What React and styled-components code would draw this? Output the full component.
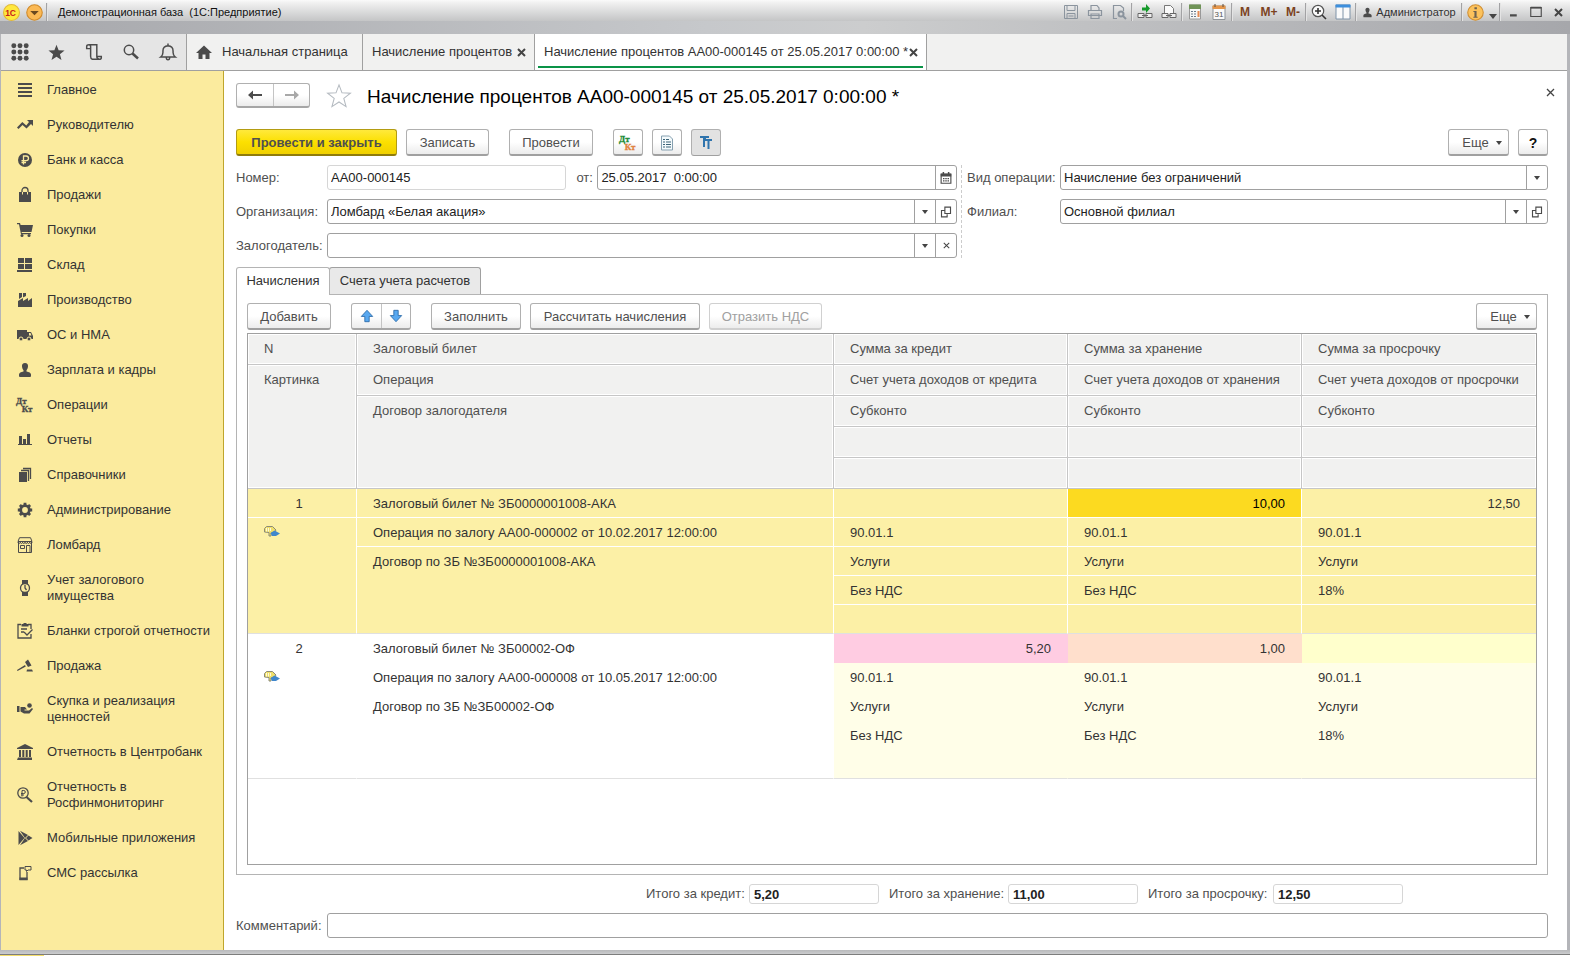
import React from "react";
import styled, { createGlobalStyle } from "styled-components";

const COLORS = {
  icon: "#4b4b4b",
  text: "#333333",
  label: "#4f4f4f",
  line: "#a0a0a0",
  sidebar: "#fbeb9e",
  selected: "#fcf0a6",
};

/* ---------- icons ---------- */

const Icon = ({ size = 16, children, ...rest }) => (
  <svg
    width={size}
    height={size}
    viewBox="0 0 16 16"
    fill={COLORS.icon}
    overflow="visible"
    aria-hidden="true"
    {...rest}
  >
    {children}
  </svg>
);

const stroke = { fill: "none", stroke: COLORS.icon, strokeWidth: 1.3 };

const DtKt = ({ top = COLORS.icon, bottom = COLORS.icon }) => (
  <Icon size={18} fontFamily="Liberation Serif, serif" fontSize="8" fontWeight="700" strokeWidth=".3">
    <text x="0" y="7" fill={top} stroke={top}>
      Дт
    </text>
    <text x="5" y="14" fill={bottom} stroke={bottom}>
      Кт
    </text>
  </Icon>
);

const SECTION_ICONS = {
  main: (
    <Icon>
      <path d="M1 1h14v2H1zM1 5h14v2H1zM1 9h14v2H1zM1 13h14v2H1z" />
    </Icon>
  ),
  trend: (
    <Icon>
      <path d="M10 3h6v6l-2-2-4.500 4.500-4-3.500-4 4L0 10.500 5.300 5l4 3.500L12 5z" />
    </Icon>
  ),
  ruble: (
    <Icon>
      <circle cx="8" cy="8" r="7" />
      <path
        d="M6.500 12.500V4h2.700a2.200 2.200 0 0 1 0 4.600H4.500M4.500 10.500h4.500"
        fill="none"
        stroke={COLORS.sidebar}
        strokeWidth="1.300"
      />
    </Icon>
  ),
  bag: (
    <Icon>
      <path d="M2 5h12v10H2z" />
      <path d="M5 6V3.500a3 3 0 0 1 6 0V6" {...stroke} />
      <path d="M5.500 5v2.500M10.500 5v2.500" stroke={COLORS.sidebar} strokeWidth="1" />
    </Icon>
  ),
  cart: (
    <Icon>
      <path d="M0 1h3l.6 2H16l-1.500 7H4.600l.2 1H14v1.200H4L2 2.200H0z" />
      <circle cx="5" cy="13.500" r="1.500" />
      <circle cx="12" cy="13.500" r="1.500" />
    </Icon>
  ),
  stock: (
    <Icon>
      <path d="M1 1h6v5H1zM8 1h7v5H8zM1 7h6v5H1zM8 7h7v5H8zM0 13h15v2H0z" />
    </Icon>
  ),
  factory: (
    <Icon>
      <path d="M1 15V9l5-3v3l5-3v3l4-3v9zM2 1h3v4L2 7zM6 1h3v3L6 5.500z" />
    </Icon>
  ),
  truck: (
    <Icon>
      <path d="M0 3h10v9H0zM11 5h3l2 4v3h-6V5z" />
      <path d="M12 6h1.500l1 2.500H12z" fill={COLORS.sidebar} />
      <circle cx="4" cy="12" r="2" stroke={COLORS.sidebar} />
      <circle cx="12" cy="12" r="2" stroke={COLORS.sidebar} />
    </Icon>
  ),
  person: (
    <Icon>
      <path d="M8 1c2.200 0 3.200 1.400 3 3.500-.2 1.800-.8 3-1.500 3.800v1.200c2.500.6 4.500 1.300 4.500 3V14q0 1-1 1H3q-1 0-1-1v-1.500c0-1.700 2-2.400 4.500-3V8.300C5.800 7.500 5.200 6.300 5 4.500 4.800 2.400 5.800 1 8 1z" />
    </Icon>
  ),
  dtkt: <DtKt />,
  chart: (
    <Icon>
      <path d="M2 4h3v8H2zM6 7h3v5H6zM10 2h3v10h-3zM1 12h14v1H1z" />
    </Icon>
  ),
  books: (
    <Icon>
      <path d="M2 5h8v10H2z" />
      <path d="M4 3.500h7.500V14M6 1.500h7.500V12" {...stroke} />
    </Icon>
  ),
  gear: (
    <Icon>
      <circle cx="8" cy="8" r="4.300" fill="none" stroke={COLORS.icon} strokeWidth="2.800" />
      <path
        d="M8 0.800v2.500M8 12.700v2.500M0.800 8h2.500M12.700 8h2.500M2.900 2.900l1.800 1.800M11.300 11.300l1.800 1.800M2.900 13.100l1.800-1.800M11.300 4.700l1.800-1.800"
        stroke={COLORS.icon}
        strokeWidth="2.800"
      />
    </Icon>
  ),
  shop: (
    <Icon>
      <path
        d="M1.500 5v10.500h13V5M1 4.500L2.500.7h11L15 4.500zM1 5c0 2 2.300 2 2.300 0 0 2 2.300 2 2.300 0 0 2 2.400 2 2.400 0 0 2 2.400 2 2.400 0 0 2 2.300 2 2.300 0 0 2 2.300 2 2.300 0M3.500 8.500h4v3h-4zM9.500 8.500h3.500v7H9.500z"
        {...stroke}
        strokeWidth="1"
      />
    </Icon>
  ),
  watch: (
    <Icon>
      <path d="M5 0h6v4H5zM5 12h6v4H5z" />
      <circle cx="8" cy="8" r="4.500" {...stroke} fill={COLORS.sidebar} />
      <path d="M8 5v3l1.500 2" {...stroke} />
    </Icon>
  ),
  form: (
    <Icon>
      <path d="M4 1.500H1V15h13v-4M11 1.500h3V6M4 6h6M4 9h3M7 9l3 3 5.500-5.500" {...stroke} />
      <path d="M4.500 1h2V0h3v1h2v2.500h-7z" />
    </Icon>
  ),
  gavel: (
    <Icon>
      <path d="M0 12l8-5 .8 1.400L.5 13zM8 4l3-2.500 3.500 6L11 9zM10 11.500h5l1 2H9.500z" />
    </Icon>
  ),
  hand: (
    <Icon>
      <path d="M0 5h2.500v6H0zM3.500 6H8l2 2.500H7.500v1H12L15 7l1 1-3.500 4.500H7L3.500 10.500z" />
      <circle cx="12.500" cy="4.500" r="2.300" />
    </Icon>
  ),
  bank: (
    <Icon>
      <path d="M8 0l8 4v1H0V4zM2 6h2v7H2zM5.300 6h2v7h-2zM8.700 6h2v7h-2zM12 6h2v7h-2zM1 13.500h14V16H0z" />
    </Icon>
  ),
  monitor: (
    <Icon>
      <circle cx="6" cy="6" r="5.200" {...stroke} />
      <path d="M5 9.500V3.500h1.800a1.500 1.500 0 0 1 0 3H4M4 8h3" {...stroke} strokeWidth="1" />
      <path d="M9.500 10l5.500 5" stroke={COLORS.icon} strokeWidth="2.200" />
    </Icon>
  ),
  play: (
    <Icon>
      <path d="M1.500 1l6 7-6 7zM3 .8l8 4.200-3 3zM3 15.200l8-4.200-3-3zM11.500 5.500L15.500 8l-4 2.500L9 8z" />
    </Icon>
  ),
  sms: (
    <Icon>
      <path d="M7 3H3v11.500h7V7" {...stroke} />
      <path d="M2.500 12.500h8V15h-8z" />
      <path d="M8 1.500h6v3.500h-3L9.500 6.500V5H8z" {...stroke} strokeWidth="1" />
    </Icon>
  ),
};

const StarShape = (props) => (
  <path
    d="M8 .6l2 5.300 5.600.2-4.400 3.500 1.500 5.500L8 12l-4.700 3.100 1.500-5.500L.4 6.100 6 5.900z"
    {...props}
  />
);

const SmallCross = ({ size = 9, weight = 1.3, color = "#444" }) => (
  <svg width={size} height={size} viewBox="0 0 9 9" aria-hidden="true">
    <path d="M1 1l7 7M8 1l-7 7" stroke={color} strokeWidth={weight} />
  </svg>
);

const OpenIcon = () => (
  <Icon size={12}>
    <path d="M6.500 1.500H14V10H6.500zM6 6H2v8.500h7.500V11" {...stroke} strokeWidth="1.500" />
  </Icon>
);

const CalendarIcon = () => (
  <Icon size={12}>
    <path d="M1.500 3h13v12h-13z" {...stroke} strokeWidth="1.500" />
    <path d="M1 2h14v4H1zM3.500 0h2v3h-2zM10.500 0h2v3h-2zM4 8h2v1.500H4zM7 8h2v1.500H7zM10 8h2v1.500h-2zM4 11h2v1.500H4zM7 11h2v1.500H7zM10 11h2v1.500h-2z" />
  </Icon>
);

const ArrowIcon = ({ down }) => (
  <Icon size={14} fill="#58a8f0" stroke="#2c6aa8">
    <path
      d={down ? "M5.500 1.500h5v6H14.500L8 14.500 1.500 7.500h4z" : "M5.500 14.500h5v-6H14.500L8 1.500 1.500 8.500h4z"}
    />
  </Icon>
);

const PledgeIcon = () => (
  <Icon>
    <path d="M.5 7V3.500l2-2h6L12 5l-2 3H7v3H5V7.500z" fill="#efdf6a" stroke="#8a8a78" />
    <path d="M2.500 3v3.500M4.500 3v3.500M6.500 3v3" stroke="#fff" strokeWidth=".8" />
    <path d="M6.500 8l4-2.500L16 8.500 12 11H8z" fill="#3f87cc" />
  </Icon>
);

/* ---------- data ---------- */

const SECTIONS = [
  ["main", "Главное"],
  ["trend", "Руководителю"],
  ["ruble", "Банк и касса"],
  ["bag", "Продажи"],
  ["cart", "Покупки"],
  ["stock", "Склад"],
  ["factory", "Производство"],
  ["truck", "ОС и НМА"],
  ["person", "Зарплата и кадры"],
  ["dtkt", "Операции"],
  ["chart", "Отчеты"],
  ["books", "Справочники"],
  ["gear", "Администрирование"],
  ["shop", "Ломбард"],
  ["watch", "Учет залогового имущества"],
  ["form", "Бланки строгой отчетности"],
  ["gavel", "Продажа"],
  ["hand", "Скупка и реализация ценностей"],
  ["bank", "Отчетность в Центробанк"],
  ["monitor", "Отчетность в Росфинмониторинг"],
  ["play", "Мобильные приложения"],
  ["sms", "СМС рассылка"],
];

const ROWS = [
  {
    n: 1,
    selected: true,
    ticket: "Залоговый билет № ЗБ0000001008-АКА",
    operation: "Операция по залогу АА00-000002 от 10.02.2017 12:00:00",
    contract: "Договор по ЗБ №ЗБ0000001008-АКА",
    sums: ["", "10,00", "12,50"],
    vat: ["Без НДС", "Без НДС", "18%"],
    fills: [COLORS.selected, "#fcda20", COLORS.selected],
  },
  {
    n: 2,
    ticket: "Залоговый билет № ЗБ00002-ОФ",
    operation: "Операция по залогу АА00-000008 от 10.05.2017 12:00:00",
    contract: "Договор по ЗБ №ЗБ00002-ОФ",
    sums: ["5,20", "1,00", ""],
    vat: ["Без НДС", "Без НДС", "18%"],
    fills: ["#ffcce2", "#ffdfcc", "#ffffcc"],
  },
];

/* ---------- parts ---------- */

const TitleBar = () => (
  <TitleStrip>
    <LogoButton aria-label="1С">
      <Icon size={17}>
        <circle cx="8" cy="8" r="7.500" fill="#ffe83d" stroke="#e3b93a" />
        <text x="2" y="11" fontSize="8" fontWeight="700" fill="#c8201c" fontFamily="Liberation Sans, sans-serif">
          1С
        </text>
      </Icon>
    </LogoButton>
    <LogoButton aria-label="Главное меню">
      <Icon size={17}>
        <circle cx="8" cy="8" r="7.300" fill="#fbb954" stroke="#cf8a2b" />
        <path d="M4 6.500h8L8 10.500z" fill="#6b4a20" />
      </Icon>
    </LogoButton>
    <Divider />
    <WindowTitle>Демонстрационная база&nbsp; (1С:Предприятие)</WindowTitle>
    <BarButton aria-label="Сохранить">
      <Icon fill="none" stroke="#8b949e">
        <path d="M1.500 1.500h13v13h-13zM4 1.500v5h8v-5M4 14.500v-5h8v5M5.500 12h5" />
      </Icon>
    </BarButton>
    <BarButton aria-label="Печать">
      <Icon fill="none" stroke="#8b949e" strokeWidth="1.200">
        <path d="M4 6V1.500h6L12 4v2M1.500 6.500h13v5h-13zM4 10h8v4.500H4z" />
      </Icon>
    </BarButton>
    <BarButton aria-label="Предварительный просмотр">
      <Icon fill="none" stroke="#8b949e" strokeWidth="1.200">
        <path d="M6 14.500H2.500v-13h7L12.500 4v3" />
        <circle cx="10" cy="10" r="2.500" strokeWidth="2" />
        <path d="M12 12l3 3" strokeWidth="2" />
      </Icon>
    </BarButton>
    <Divider />
    <BarButton aria-label="Получить ссылку">
      <Icon>
        <path d="M1 9.500h6v4H1zM9 9.500h6v4H9zM5 11.500h6" fill="#eee" stroke="#666" />
        <path d="M5 3.500h4V0l4 4.500L9 9V6.500H5z" fill="#159a2a" />
      </Icon>
    </BarButton>
    <BarButton aria-label="Перейти по ссылке">
      <Icon>
        <path d="M3.500 10V1.500h6l3 3V10" fill="#fafafa" stroke="#777" />
        <path d="M1 9.500h6v4H1zM9 9.500h6v4H9zM5 11.500h6" fill="#eee" stroke="#666" />
      </Icon>
    </BarButton>
    <Divider />
    <BarButton aria-label="Калькулятор">
      <Icon>
        <path d="M2.500 1h11v14h-11z" fill="#f8f8f8" stroke="#999" />
        <path d="M2 .5h12V5H2z" fill="#6f9357" />
        <path d="M4 7h2v1H4zM7 7h2v1H7zM4 9.500h2v1H4zM7 9.500h2v1H7zM4 12h2v1H4zM7 12h2v1H7z" fill="#6c7c8c" />
        <path d="M10.500 7h2v6h-2z" fill="#e58a55" />
      </Icon>
    </BarButton>
    <BarButton aria-label="Календарь">
      <Icon>
        <path d="M2 2h12v13.500H2z" fill="#fafafa" stroke="#8e9499" />
        <path d="M1.500 1.500h13V5h-13z" fill="#e5964a" />
        <path d="M4 0v3M12 0v3" stroke="#5b4a3a" />
        <text x="3.500" y="13" fontSize="8" fontFamily="Liberation Sans, sans-serif" fill="#555">
          31
        </text>
      </Icon>
    </BarButton>
    <Divider />
    <BarButton $memory>M</BarButton>
    <BarButton $memory>M+</BarButton>
    <BarButton $memory>M-</BarButton>
    <Divider />
    <BarButton aria-label="Масштаб">
      <Icon>
        <circle cx="7" cy="7" r="5.700" fill="#fafafa" stroke="#555" strokeWidth="1.200" />
        <path d="M4 7h6M7 4v6M11 11l4 4" stroke="#333" strokeWidth="1.600" />
      </Icon>
    </BarButton>
    <BarButton aria-label="Панели">
      <Icon>
        <path d="M1 1h14v14H1zM8 3v12" fill="#fafafa" stroke="#7f93a8" />
        <path d="M.5.5h15v3H.5z" fill="#3d8fdd" />
      </Icon>
    </BarButton>
    <Divider />
    <UserButton>
      <Icon size={11}>{SECTION_ICONS.person.props.children}</Icon>
      Администратор
    </UserButton>
    <Divider />
    <BarButton aria-label="Справка">
      <Icon size={17}>
        <circle cx="8" cy="8" r="7.300" fill="#fcc25c" stroke="#cf8f35" />
        <path d="M7 3h2.300v2H7zM6 6.500h3V12h1v1H6v-1h1V7.500H6z" fill="#6d6250" />
      </Icon>
    </BarButton>
    <BarButton $width="12px" aria-label="Ещё">
      <LowCaret />
    </BarButton>
    <Divider />
    <BarButton $width="23px" aria-label="Свернуть">
      <Icon size={12}>
        <path d="M4 11h9v3H4z" />
      </Icon>
    </BarButton>
    <BarButton $width="23px" aria-label="Развернуть">
      <Icon size={12}>
        <path d="M1 2h14v12H1z" {...stroke} strokeWidth="1.500" />
        <path d="M1 1h14v2.500H1z" />
      </Icon>
    </BarButton>
    <BarButton $width="23px" aria-label="Закрыть">
      <SmallCross weight={2} />
    </BarButton>
  </TitleStrip>
);

const TabStrip = () => (
  <TabRow>
    <ToolButton aria-label="Меню функций">
      <Icon size={18}>
        {[2.5, 8, 13.5].map((y) =>
          [2.5, 8, 13.5].map((x) => <circle key={`${x}-${y}`} cx={x} cy={y} r="2.200" />)
        )}
      </Icon>
    </ToolButton>
    <ToolButton aria-label="Избранное">
      <Icon size={17}>
        <StarShape />
      </Icon>
    </ToolButton>
    <ToolButton aria-label="История">
      <Icon size={18}>
        <path
          d="M3.500 1.500h7v10.500q0 2 2 2.500h-6q-1.500-.5-1.500-2.500V5H1.500V3q0-1.500 2-1.500zM5 5V3q0-1.500-1.500-1.500M10.500 12h4v1q0 1.500-2 1.500"
          {...stroke}
        />
      </Icon>
    </ToolButton>
    <ToolButton aria-label="Поиск">
      <Icon>
        <circle cx="6" cy="6" r="4.700" {...stroke} strokeWidth="1.500" />
        <path d="M9.500 9.500l5.500 5" stroke={COLORS.icon} strokeWidth="2.500" />
      </Icon>
    </ToolButton>
    <ToolButton aria-label="Оповещения">
      <Icon size={18}>
        <path d="M1.500 12.500q2-1.500 2-4V7q0-4 4.500-4.500Q12.500 3 12.500 7v1.500q0 2.500 2 4zM6.500 12.800q0 2 1.500 2t1.500-2M8 2.500V.5" {...stroke} />
      </Icon>
    </ToolButton>
    <WindowTab $width="176px" $home>
      <Icon>
        <path d="M8 1.500L16 9h-2.500v6h-4v-4.500h-3V15h-4V9H0z" />
      </Icon>
      Начальная страница
    </WindowTab>
    <WindowTab $width="172px">
      Начисление процентов
      <SmallCross weight={2} />
    </WindowTab>
    <WindowTab $width="393px" $active>
      Начисление процентов АА00-000145 от 25.05.2017 0:00:00 *
      <SmallCross weight={2} />
    </WindowTab>
  </TabRow>
);

const DropField = ({ id, label, value, children }) => (
  <>
    <FieldLabel htmlFor={id}>{label}</FieldLabel>
    <Field>
      <FieldSelect id={id} defaultValue={value}>
        <option value={value}>{value}</option>
      </FieldSelect>
      <FieldMark>
        <Caret />
      </FieldMark>
      {children}
    </Field>
  </>
);

const SumRow = ({ values, fills, numeric, selected, last }) =>
  values.map((value, i) => (
    <Cell key={i} $selected={selected} $fill={fills[i]} $numeric={numeric} $strong={value === "10,00"} $last={last}>
      {value}
    </Cell>
  ));

const EntryRows = ({ row }) => {
  const sel = row.selected;
  const pale = Array(3).fill(sel ? COLORS.selected : "#fffee8");
  const services = ["Услуги", "Услуги", "Услуги"];
  const accounts = ["90.01.1", "90.01.1", "90.01.1"];
  return (
    <tbody>
      <tr>
        <Cell $selected={sel} $center>{row.n}</Cell>
        <Cell $selected={sel}>{row.ticket}</Cell>
        <SumRow values={row.sums} fills={row.fills} selected={sel} numeric />
      </tr>
      <tr>
        <Cell $selected={sel} $last rowSpan="4">
          <PledgeIcon />
        </Cell>
        <Cell $selected={sel}>{row.operation}</Cell>
        <SumRow values={accounts} fills={pale} selected={sel} />
      </tr>
      <tr>
        <Cell $selected={sel} $last rowSpan="3">{row.contract}</Cell>
        <SumRow values={services} fills={pale} selected={sel} />
      </tr>
      <tr>
        <SumRow values={row.vat} fills={pale} selected={sel} />
      </tr>
      <tr>
        <SumRow values={["", "", ""]} fills={pale} selected={sel} last />
      </tr>
    </tbody>
  );
};

const App = () => {
  return (
    <Wrapper>
      <GlobalStyle />
      <TitleBar />
      <Body>
        <TabStrip />
        <Columns>
          <Sidebar>
            {SECTIONS.map(([icon, name]) => (
              <SectionLink href="#" key={name}>
                <SectionIcon>{SECTION_ICONS[icon]}</SectionIcon>
                <span>{name}</span>
              </SectionLink>
            ))}
          </Sidebar>
          <Document>
            <HeadingRow>
              <ButtonPair>
                <PairButton $width="36px" aria-label="Назад">
                  <Icon>
                    <path d="M1 8l5-4.500V7h9v2H6v3.500z" />
                  </Icon>
                </PairButton>
                <PairButton $width="36px" aria-label="Вперед">
                  <Icon fill="#a8a8a8">
                    <path d="M15 8l-5-4.500V7H1v2h9v3.500z" />
                  </Icon>
                </PairButton>
              </ButtonPair>
              <FavoriteButton aria-label="В избранное">
                <Icon size={24}>
                  <StarShape fill="none" stroke="#b4bac0" strokeWidth=".7" />
                </Icon>
              </FavoriteButton>
              <Heading>Начисление процентов АА00-000145 от 25.05.2017 0:00:00 *</Heading>
              <CloseButton aria-label="Закрыть">
                <SmallCross />
              </CloseButton>
            </HeadingRow>

            <Commands>
              <Button $width="161px" $primary>Провести и закрыть</Button>
              <Button $width="83px">Записать</Button>
              <Button $width="84px" $apart>Провести</Button>
              <Button $width="30px" $apart aria-label="Дт Кт">
                <DtKt top="#1b8b35" bottom="#e0813c" />
              </Button>
              <Button $width="30px" aria-label="Отчет">
                <Icon>
                  <path d="M2.500 1h8l3 3v11h-11z" fill="#f4fafc" stroke="#86a0b0" />
                  <path d="M4 4h2v1H4zM7 4h3v1H7zM4 6.500h2v1H4zM7 6.500h5v1H7zM4 9h2v1H4zM7 9h5v1H7zM4 11.500h2v1H4zM7 11.500h5v1H7z" fill="#3c6478" />
                </Icon>
              </Button>
              <Button $width="30px" $pressed aria-label="Тт">
                <Icon fill="#2f74ad">
                  <path d="M2 1h9v2H8v1h6v2h-2.500v8h-2V6H7v6H5V3H2z" />
                </Icon>
              </Button>
              <Spacer />
              <Button $width="61px" $menu>
                Еще <Caret />
              </Button>
              <Button $width="30px" $help>?</Button>
            </Commands>

            <Fields>
              <FieldsLeft>
                <FieldLabel htmlFor="number">Номер:</FieldLabel>
                <NumberDate>
                  <Field $muted>
                    <FieldInput id="number" defaultValue="АА00-000145" />
                  </Field>
                  <FieldLabel htmlFor="date">от:</FieldLabel>
                  <Field>
                    <FieldInput id="date" defaultValue="25.05.2017  0:00:00" />
                    <FieldButton aria-label="Выбрать дату">
                      <CalendarIcon />
                    </FieldButton>
                  </Field>
                </NumberDate>
                <DropField id="org" label="Организация:" value="Ломбард «Белая акация»">
                  <FieldButton aria-label="Открыть организацию">
                    <OpenIcon />
                  </FieldButton>
                </DropField>
                <DropField id="pledger" label="Залогодатель:" value="">
                  <FieldButton aria-label="Очистить">
                    <SmallCross size={7} />
                  </FieldButton>
                </DropField>
              </FieldsLeft>
              <FieldsRight>
                <DropField id="kind" label="Вид операции:" value="Начисление без ограничений" />
                <DropField id="branch" label="Филиал:" value="Основной филиал">
                  <FieldButton aria-label="Открыть филиал">
                    <OpenIcon />
                  </FieldButton>
                </DropField>
              </FieldsRight>
            </Fields>

            <PageTabs role="tablist">
              <PageTab role="tab" aria-selected="true" $width="94px" $active>Начисления</PageTab>
              <PageTab role="tab" aria-selected="false" $width="152px">Счета учета расчетов</PageTab>
            </PageTabs>
            <Pane>
              <TableCommands>
                <Button $width="84px">Добавить</Button>
                <ArrowPair>
                  <PairButton $width="29px" aria-label="Вверх">
                    <ArrowIcon />
                  </PairButton>
                  <PairButton $width="29px" aria-label="Вниз">
                    <ArrowIcon down />
                  </PairButton>
                </ArrowPair>
                <Button $width="90px" $apart>Заполнить</Button>
                <Button $width="170px">Рассчитать начисления</Button>
                <Button $width="113px" disabled>Отразить НДС</Button>
                <Spacer />
                <Button $width="61px" $menu>
                  Еще <Caret />
                </Button>
              </TableCommands>
              <TableBox>
                <Table>
                  <colgroup>
                    <Col $width="109px" />
                    <Col $width="477px" />
                    <Col $width="234px" />
                    <Col $width="234px" />
                    <Col $width="234px" />
                  </colgroup>
                  <thead>
                    <tr>
                      <HeadCell>N</HeadCell>
                      <HeadCell>Залоговый билет</HeadCell>
                      <HeadCell>Сумма за кредит</HeadCell>
                      <HeadCell>Сумма за хранение</HeadCell>
                      <HeadCell>Сумма за просрочку</HeadCell>
                    </tr>
                    <tr>
                      <HeadCell rowSpan="4">Картинка</HeadCell>
                      <HeadCell>Операция</HeadCell>
                      <HeadCell>Счет учета доходов от кредита</HeadCell>
                      <HeadCell>Счет учета доходов от хранения</HeadCell>
                      <HeadCell>Счет учета доходов от просрочки</HeadCell>
                    </tr>
                    <tr>
                      <HeadCell rowSpan="3">Договор залогодателя</HeadCell>
                      <HeadCell>Субконто</HeadCell>
                      <HeadCell>Субконто</HeadCell>
                      <HeadCell>Субконто</HeadCell>
                    </tr>
                    <tr>
                      <HeadCell />
                      <HeadCell />
                      <HeadCell />
                    </tr>
                    <tr>
                      <HeadCell />
                      <HeadCell />
                      <HeadCell />
                    </tr>
                  </thead>
                  {ROWS.map((row) => (
                    <EntryRows row={row} key={row.n} />
                  ))}
                </Table>
              </TableBox>
            </Pane>

            <Totals>
              <TotalLabel htmlFor="t1" $width="103px">Итого за кредит:</TotalLabel>
              <TotalInput id="t1" defaultValue="5,20" readOnly />
              <TotalLabel htmlFor="t2" $width="119px">Итого за хранение:</TotalLabel>
              <TotalInput id="t2" defaultValue="11,00" readOnly />
              <TotalLabel htmlFor="t3" $width="125px">Итого за просрочку:</TotalLabel>
              <TotalInput id="t3" defaultValue="12,50" readOnly />
            </Totals>
            <CommentRow>
              <FieldLabel htmlFor="comment">Комментарий:</FieldLabel>
              <Field>
                <FieldInput id="comment" />
              </Field>
            </CommentRow>
          </Document>
        </Columns>
      </Body>
      <BottomEdge>
        <BottomMark />
      </BottomEdge>
    </Wrapper>
  );
};

/* ---------- styles ---------- */

const GlobalStyle = createGlobalStyle`
  * {
    box-sizing: border-box;
  }
  body {
    margin: 0;
    background: #fff;
    color: ${COLORS.text};
    font: 13px/16px "Liberation Sans", Arial, sans-serif;
  }
  button, input, select {
    font: inherit;
    color: inherit;
    margin: 0;
    padding: 0;
    border: 0;
    background: none;
    outline: none;
  }
  svg {
    flex: none;
    display: block;
  }
`;
const Wrapper = styled.div`
  min-height: 100vh;
  display: flex;
  flex-direction: column;
  background: #b4b5b9;
`;
const TitleStrip = styled.header`
  height: 34px;
  padding-bottom: 10px;
  display: flex;
  align-items: center;
  background: linear-gradient(#fafafa 0, #f0f0f0 3px, #c4c5c6 21px, transparent 21px),
    linear-gradient(90deg, #a6a7ab, #c6c8cb 45%, #cccdce 55%, #a6a7ab);
`;
const WindowTitle = styled.div`
  flex: 1;
  padding-left: 10px;
  color: #111;
  font-size: 11px;
`;
const LogoButton = styled.button`
  width: 23px;
  display: flex;
  justify-content: center;
`;
const Divider = styled.span`
  width: 2px;
  height: 18px;
  border-left: 1px solid #a2a2a4;
  background: #e4e4e4;
`;
const BarButton = styled.button`
  width: ${(p) => p.$width || "24px"};
  display: flex;
  justify-content: center;
  align-items: center;
  color: #7c431f;
  font-size: 12px;
  font-weight: ${(p) => (p.$memory ? 700 : 400)};
`;
const UserButton = styled.button`
  width: 104px;
  display: flex;
  justify-content: center;
  align-items: center;
  gap: 3px;
  font-size: 11px;
  white-space: nowrap;
`;
const Body = styled.div`
  flex: 1;
  display: flex;
  flex-direction: column;
  margin: 0 3px 0 1px;
  background: #fff;
`;
const TabRow = styled.div`
  height: 37px;
  display: flex;
  background: #f1f1f0;
  border-bottom: 1px solid ${COLORS.line};
`;
const ToolButton = styled.button`
  width: 37px;
  display: flex;
  align-items: center;
  justify-content: center;
  background: #e5e5e5;
`;
const WindowTab = styled.button`
  width: ${(p) => p.$width};
  display: flex;
  align-items: center;
  justify-content: ${(p) => (p.$home ? "flex-start" : "space-between")};
  gap: ${(p) => (p.$home ? "10px" : 0)};
  padding: 0 8px 0 9px;
  border-left: 1px solid ${COLORS.line};
  color: ${COLORS.text};
  white-space: nowrap;
  ${(p) =>
    p.$active &&
    `
    border-right: 1px solid ${COLORS.line};
    background: linear-gradient(#0a9347, #0a9347) center bottom 2px / calc(100% - 6px) 2px no-repeat #fff;
  `}
`;
const Columns = styled.div`
  flex: 1;
  display: flex;
`;
const Sidebar = styled.nav`
  width: 223px;
  flex: none;
  padding-top: 1px;
  background: ${COLORS.sidebar};
  border-right: 1px solid #bfa62c;
`;
const SectionLink = styled.a`
  display: flex;
  align-items: center;
  gap: 14px;
  padding: 10px 12px 9px 16px;
  color: ${COLORS.text};
  text-decoration: none;
`;
const SectionIcon = styled.span`
  width: 16px;
  height: 16px;
  flex: none;
  display: flex;
  align-items: center;
  justify-content: center;
`;
const Document = styled.main`
  flex: 1;
  min-width: 0;
  display: flex;
  flex-direction: column;
  padding: 12px 19px 12px 12px;
`;
const HeadingRow = styled.div`
  height: 46px;
  margin-right: -7px;
  display: flex;
  align-items: flex-start;
`;
const ButtonPair = styled.div`
  display: flex;
  height: 25px;
  border: 1px solid #b0b0b0;
  border-bottom: 2px solid #a6a6a6;
  border-radius: 3px;
  background: linear-gradient(#fff 50%, #ececec);
`;
const ArrowPair = styled(ButtonPair)`
  height: 27px;
  margin-left: 11px;
`;
const PairButton = styled.button`
  width: ${(p) => p.$width};
  display: flex;
  align-items: center;
  justify-content: center;
  & + & {
    border-left: 1px solid #c4c4c4;
  }
`;
const FavoriteButton = styled.button`
  margin: 1px 16px 0 17px;
`;
const Heading = styled.h1`
  flex: 1;
  margin: 2px 0 0;
  color: #000;
  font-size: 19px;
  line-height: 24px;
  font-weight: 400;
`;
const CloseButton = styled.button`
  margin-top: 5px;
  width: 9px;
`;
const Commands = styled.div`
  display: flex;
  gap: 9px;
`;
const Button = styled.button`
  width: ${(p) => p.$width};
  height: 27px;
  margin-left: ${(p) => (p.$apart ? "11px" : 0)};
  display: flex;
  align-items: center;
  justify-content: center;
  gap: 7px;
  padding: 1px 0 0 ${(p) => (p.$menu ? "7px" : 0)};
  border: 1px solid #b0b0b0;
  border-bottom: 2px solid #a0a0a0;
  border-radius: 3px;
  background: linear-gradient(#fff 50%, #ececec);
  color: ${COLORS.label};
  white-space: nowrap;
  ${(p) =>
    p.$primary &&
    `
    border-color: #b39c12 #b39c12 #8f7c0c;
    background: linear-gradient(#ffe93c, #fce000 50%, #f0d000);
    font-weight: 700;
  `}
  ${(p) => p.$pressed && "background: #e2e2e2; border-bottom-width: 1px;"}
  ${(p) => p.$help && "color: #111; font-weight: 700; font-size: 14px;"}
  &:disabled {
    border-color: #d0d0d0;
    color: #a0a0a0;
  }
`;
const Spacer = styled.div`
  flex: 1;
`;
const Caret = styled.span`
  border: 3px solid transparent;
  border-top: 4px solid #444;
  border-bottom: 0;
`;
const LowCaret = styled(Caret)`
  border-width: 5px 4px 0;
  margin-top: 8px;
`;
const Fields = styled.div`
  display: grid;
  grid-template-columns: 726fr 586fr;
  margin-top: 9px;
`;
const FieldsLeft = styled.div`
  display: grid;
  grid-template-columns: 91px 1fr;
  grid-auto-rows: 25px;
  row-gap: 9px;
  align-items: center;
  padding-right: 4px;
  border-right: 1px dashed #cccccc;
`;
const FieldsRight = styled.div`
  display: grid;
  grid-template-columns: 93px 1fr;
  grid-auto-rows: 25px;
  row-gap: 9px;
  align-items: center;
  padding-left: 5px;
`;
const NumberDate = styled.div`
  display: grid;
  grid-template-columns: 239fr 31px 359fr;
  align-items: center;
  label {
    padding-left: 10px;
  }
`;
const FieldLabel = styled.label`
  color: ${COLORS.label};
  white-space: nowrap;
`;
const Field = styled.div`
  height: 25px;
  min-width: 0;
  display: flex;
  border: 1px solid ${(p) => (p.$muted ? "#d6d6d6" : COLORS.line)};
  border-radius: 3px;
  background: #fff;
`;
const FieldInput = styled.input`
  flex: 1;
  min-width: 0;
  padding: 0 3px;
  color: #222;
`;
const FieldSelect = styled.select`
  flex: 1;
  min-width: 0;
  padding: 0 3px;
  color: #222;
  appearance: none;
`;
const FieldMark = styled.span`
  width: 21px;
  display: flex;
  align-items: center;
  justify-content: center;
  border-left: 1px solid ${COLORS.line};
  pointer-events: none;
`;
const FieldButton = styled.button`
  width: 21px;
  display: flex;
  align-items: center;
  justify-content: center;
  border-left: 1px solid ${COLORS.line};
`;
const PageTabs = styled.div`
  display: flex;
  height: 27px;
  margin-top: 9px;
`;
const PageTab = styled.button`
  width: ${(p) => p.$width};
  height: ${(p) => (p.$active ? "28px" : "27px")};
  padding-bottom: ${(p) => (p.$active ? "2px" : "1px")};
  z-index: ${(p) => (p.$active ? 1 : 0)};
  margin-right: -1px;
  border: 1px solid ${(p) => (p.$active ? "#b4b4b4" : COLORS.line)};
  border-bottom: 0;
  border-radius: 3px 3px 0 0;
  background: ${(p) => (p.$active ? "#fff" : "#e9e9e9")};
  white-space: nowrap;
`;
const Pane = styled.section`
  flex: 1;
  display: flex;
  flex-direction: column;
  padding: 8px 10px 9px;
  border: 1px solid #b4b4b4;
`;
const TableCommands = styled.div`
  display: flex;
  gap: 9px;
  margin-bottom: 3px;
`;
const TableBox = styled.div`
  flex: 1;
  border: 1px solid ${COLORS.line};
`;
const Table = styled.table`
  width: 100%;
  table-layout: fixed;
  border-spacing: 0;
`;
const Col = styled.col`
  width: ${(p) => p.$width};
`;
const HeadCell = styled.th`
  height: 31px;
  padding: 7px 0 0 16px;
  vertical-align: top;
  text-align: left;
  font-weight: 400;
  color: ${COLORS.label};
  background: #f1f1f0;
  border: solid #c6c6c6;
  border-width: 0 1px 1px 0;
  box-shadow: inset 0 0 0 1px #fff;
  white-space: nowrap;
  &:last-child {
    border-right: 0;
  }
`;
const Cell = styled.td`
  height: 29px;
  padding: ${(p) => (p.$center ? "7px 6px 0 0" : "7px 16px 0 16px")};
  vertical-align: top;
  text-align: ${(p) => (p.$numeric ? "right" : p.$center ? "center" : "left")};
  background: ${(p) => p.$fill || (p.$selected ? COLORS.selected : "#fff")};
  border: solid ${(p) => (p.$selected ? "#fff" : p.$fill || "#fff")};
  border-width: 0 1px 1px 0;
  border-bottom-color: ${(p) => p.$last && "#e0e0e0"};
  color: ${(p) => (p.$strong ? "#000" : COLORS.text)};
  white-space: nowrap;
  &:last-child {
    border-right: 0;
  }
`;
const Totals = styled.div`
  display: flex;
  align-items: center;
  justify-content: flex-end;
  margin: 9px 145px 9px 0;
`;
const TotalLabel = styled.label`
  width: ${(p) => p.$width};
  color: ${COLORS.label};
  white-space: nowrap;
  input + & {
    margin-left: 10px;
  }
`;
const TotalInput = styled.input`
  width: 130px;
  height: 20px;
  padding: 0 4px;
  border: 1px solid #d6d6d6;
  border-radius: 3px;
  color: #222;
  font-weight: 700;
`;
const CommentRow = styled.div`
  display: grid;
  grid-template-columns: 91px 1fr;
  align-items: center;
`;
const BottomEdge = styled.div`
  height: 6px;
  display: flex;
  align-items: flex-end;
  background: linear-gradient(#b8b9bb 0, #cbccce 4px, #7d7d7d 4px, #7d7d7d 5px, #fff 5px);
`;
const BottomMark = styled.div`
  width: 44px;
  height: 1px;
  background: #f3dc6a;
`;

export default App;
